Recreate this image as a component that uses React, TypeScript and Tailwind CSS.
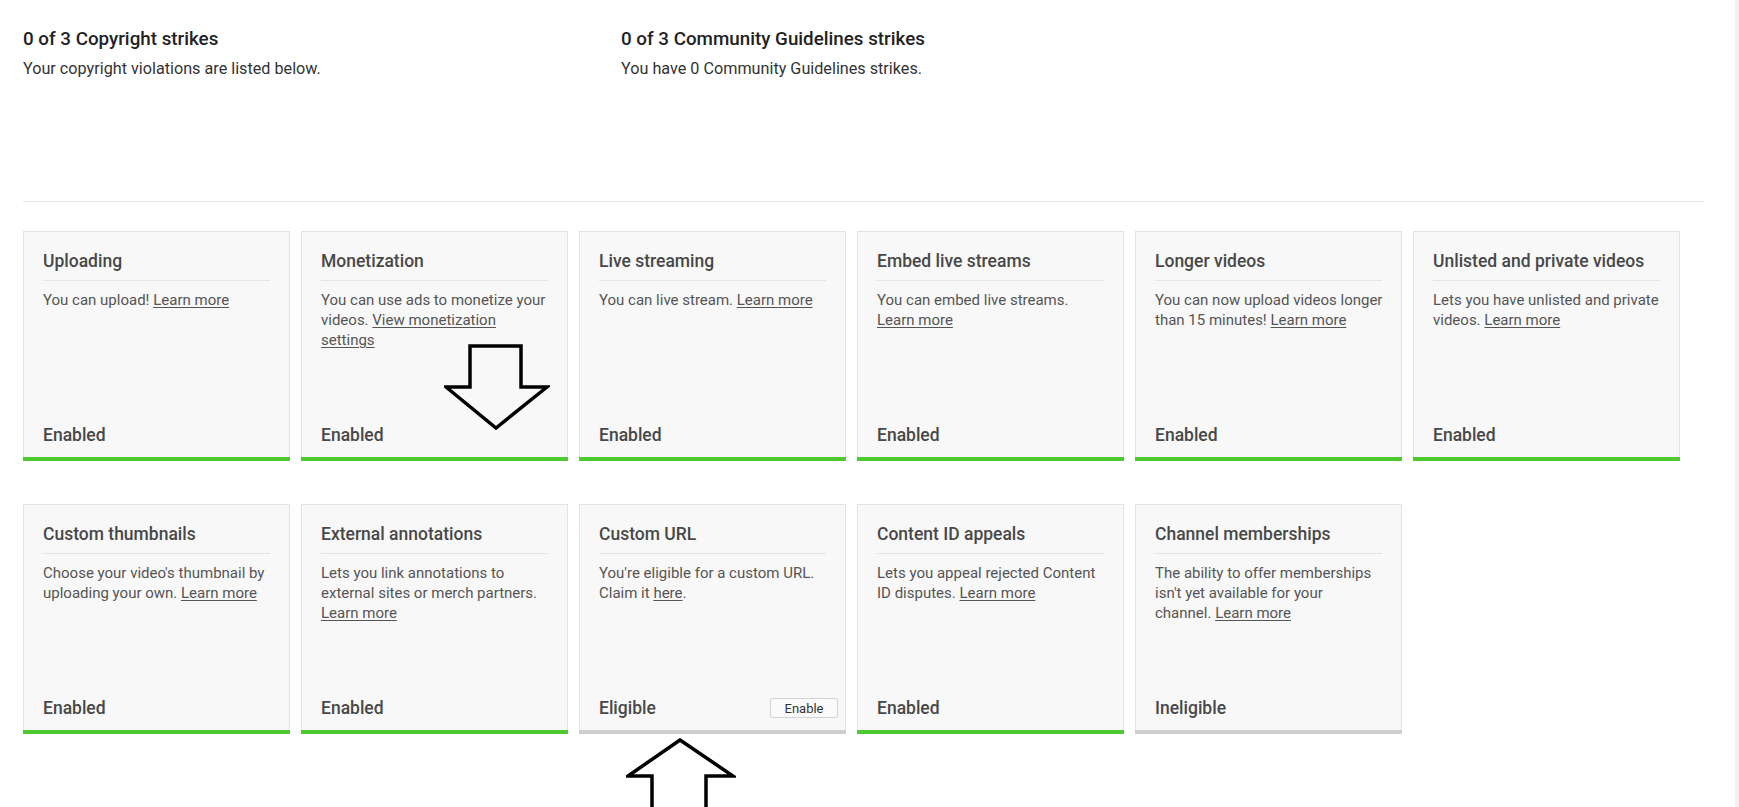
import React from "react";

type Feature = {
  title: string;
  body: React.ReactNode;
  status: "Enabled" | "Eligible" | "Ineligible";
  action?: string;
};

const Link = ({ children }: { children: React.ReactNode }) => (
  <a href="#" className="text-[#555] underline underline-offset-[2px]">
    {children}
  </a>
);

const ROW_ONE: Feature[] = [
  { title: "Uploading", body: <>You can upload! <Link>Learn more</Link></>, status: "Enabled" },
  {
    title: "Monetization",
    body: <>You can use ads to monetize your videos. <Link>View monetization settings</Link></>,
    status: "Enabled",
  },
  { title: "Live streaming", body: <>You can live stream. <Link>Learn more</Link></>, status: "Enabled" },
  { title: "Embed live streams", body: <>You can embed live streams. <Link>Learn more</Link></>, status: "Enabled" },
  {
    title: "Longer videos",
    body: <>You can now upload videos longer than 15 minutes! <Link>Learn more</Link></>,
    status: "Enabled",
  },
  {
    title: "Unlisted and private videos",
    body: <>Lets you have unlisted and private videos. <Link>Learn more</Link></>,
    status: "Enabled",
  },
];

const ROW_TWO: Feature[] = [
  {
    title: "Custom thumbnails",
    body: <>Choose your video's thumbnail by uploading your own. <Link>Learn more</Link></>,
    status: "Enabled",
  },
  {
    title: "External annotations",
    body: <>Lets you link annotations to external sites or merch partners. <Link>Learn more</Link></>,
    status: "Enabled",
  },
  {
    title: "Custom URL",
    body: <>You're eligible for a custom URL. Claim it <Link>here</Link>.</>,
    status: "Eligible",
    action: "Enable",
  },
  {
    title: "Content ID appeals",
    body: <>Lets you appeal rejected Content ID disputes. <Link>Learn more</Link></>,
    status: "Enabled",
  },
  {
    title: "Channel memberships",
    body: (
      <>
        The ability to offer memberships isn't yet available for your
        <br />
        channel. <Link>Learn more</Link>
      </>
    ),
    status: "Ineligible",
  },
];

function FeatureCard({ f }: { f: Feature }) {
  const on = f.status === "Enabled";
  return (
    <div className="flex h-[230px] w-[267px] flex-col border border-b-0 border-[#e3e3e3] bg-[#f8f8f8]">
      <div className="flex flex-1 flex-col px-[19px] pt-[17px]">
        <div className="border-b border-[#e4e4e4] pb-[7px] text-[17.5px] font-medium leading-[24px] text-[#484848]">
          {f.title}
        </div>
        <p className="-mr-[1px] mt-[9px] text-[15px] leading-[20px] text-[#555]">{f.body}</p>
        <div className="mt-auto flex items-center justify-between pb-[10px]">
          <span className="text-[17.5px] font-medium leading-[24px] text-[#484848]">{f.status}</span>
          {f.action && (
            <button className="-mr-[12px] h-[20px] w-[68px] rounded-[2px] border border-[#d3d3d3] bg-[#fafafa] text-[13px] leading-none text-[#333]">
              {f.action}
            </button>
          )}
        </div>
      </div>
      <div className={`-mx-px h-[4px] ${on ? "bg-[#4dca2f]" : "bg-[#cfcfcf]"}`} />
    </div>
  );
}

export default function App() {
  return (
    <div className="relative h-screen w-full overflow-hidden bg-white font-['Roboto','Liberation_Sans',sans-serif]">
      {/* page edge strip on the right */}
      <div className="absolute right-0 top-0 h-full w-[4px] bg-[#f1f1f1]" />

      <div className="pl-[23px] pr-[35px] pt-[27px]">
        <div className="flex">
          <div className="w-[598px]">
            <h2 className="text-[18.8px] font-medium leading-[24px] text-[#222]">0 of 3 Copyright strikes</h2>
            <p className="mt-[8px] text-[16.2px] leading-[20px] text-[#333]">Your copyright violations are listed below.</p>
          </div>
          <div>
            <h2 className="text-[18.8px] font-medium leading-[24px] text-[#222]">0 of 3 Community Guidelines strikes</h2>
            <p className="mt-[8px] text-[16.2px] leading-[20px] text-[#333]">You have 0 Community Guidelines strikes.</p>
          </div>
        </div>

        <div className="mt-[122px] h-px w-[1681px] bg-[#e6e6e6]" />

        <div className="mt-[29px] flex flex-col gap-y-[43px]">
          <div className="flex gap-x-[11px]">
            {ROW_ONE.map((f) => (
              <FeatureCard key={f.title} f={f} />
            ))}
          </div>
          <div className="flex gap-x-[11px]">
            {ROW_TWO.map((f) => (
              <FeatureCard key={f.title} f={f} />
            ))}
          </div>
        </div>
      </div>

      {/* hand-drawn annotation arrows */}
      <svg className="absolute left-[444px] top-[344px]" width="106" height="88" viewBox="0 0 106 88" fill="none">
        <polygon points="26,2 77,2 77,43 103,43 52,84 2,43 26,43" stroke="#000" strokeWidth="3.5" strokeLinejoin="miter" />
      </svg>
      <svg className="absolute left-[626px] top-[738px]" width="110" height="80" viewBox="0 0 110 80" fill="none">
        <polygon points="54,2 107,38 80,38 80,90 26,90 26,38 2,38" stroke="#000" strokeWidth="3.5" strokeLinejoin="miter" />
      </svg>
    </div>
  );
}
